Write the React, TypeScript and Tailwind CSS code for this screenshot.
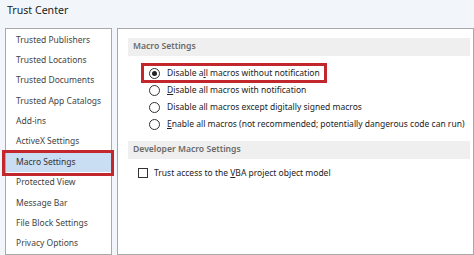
import React from 'react';

const navItems = [
  'Trusted Publishers',
  'Trusted Locations',
  'Trusted Documents',
  'Trusted App Catalogs',
  'Add-ins',
  'ActiveX Settings',
  'Macro Settings',
  'Protected View',
  'Message Bar',
  'File Block Settings',
  'Privacy Options',
];

const Radio: React.FC<{ checked?: boolean }> = ({ checked }) => (
  <span className="flex h-[11px] w-[11px] shrink-0 items-center justify-center rounded-full border border-[#333] bg-white">
    {checked && <span className="h-[5px] w-[5px] rounded-full bg-[#222]" />}
  </span>
);

const SectionHeader: React.FC<{ title: string }> = ({ title }) => (
  <div className="flex h-[18px] items-center bg-[#efefef] pl-[5px] text-[8.6px] font-semibold whitespace-nowrap text-[#6b6b6b]">
    {title}
  </div>
);

export default function App() {
  return (
    <div
      className="flex h-[255px] w-[474px] flex-col overflow-hidden bg-[#f2f6fa] text-[#333]"
      style={{ fontFamily: '"Segoe UI", "Noto Sans", sans-serif' }}
    >
      {/* Title */}
      <div className="flex h-[29px] items-center pl-[7px] pb-[5px] text-[10.6px] text-[#222]">Trust Center</div>

      <div className="flex flex-1 gap-[5px] pl-[5px]">
        {/* Left nav */}
        <div className="w-[107px] shrink-0 border border-[#a9a9a9] bg-white pt-[1px]">
          {navItems.map((item) => {
            const active = item === 'Macro Settings';
            return (
              <div
                key={item}
                className={
                  'relative flex h-[20.4px] items-center pl-[10px] text-[8.5px] whitespace-nowrap ' +
                  (active ? 'bg-[#c9ddf3] text-[#333]' : 'text-[#444]')
                }
              >
                {item}
                {active && (
                  <span className="pointer-events-none absolute -top-[2px] -bottom-[4px] -left-[4px] -right-[3px] border-[3px] border-[#c1272d]" />
                )}
              </div>
            );
          })}
        </div>

        {/* Right content */}
        <div className="flex-1 border border-[#a9a9a9] bg-white pl-[10px] pr-[3px] pt-[9px]">
          <SectionHeader title="Macro Settings" />
          <div className="flex flex-col pl-[21px] pt-[9px] text-[8.5px] whitespace-nowrap text-[#222]">
            <div className="relative flex h-[17px] items-center gap-[7px]">
              <Radio checked />
              <span>
                Disable a<span className="underline">l</span>l macros without notification
              </span>
              <span className="pointer-events-none absolute -left-[8px] top-[-2px] bottom-[-1px] w-[186px] border-[3px] border-[#c1272d]" />
            </div>
            <div className="flex h-[17px] items-center gap-[7px]">
              <Radio />
              <span>
                <span className="underline">D</span>isable all macros with notification
              </span>
            </div>
            <div className="flex h-[17px] items-center gap-[7px]">
              <Radio />
              <span>Disable all macros except digitally signed macros</span>
            </div>
            <div className="flex h-[17px] items-center gap-[7px]">
              <Radio />
              <span>
                <span className="underline">E</span>nable all macros (not recommended; potentially dangerous code can run)
              </span>
            </div>
          </div>

          <div className="mt-[8px]">
            <SectionHeader title="Developer Macro Settings" />
          </div>
          <div className="flex items-center gap-[6px] pl-[10px] pt-[8px] text-[8.5px] whitespace-nowrap text-[#222]">
            <span className="h-[10px] w-[10px] shrink-0 border border-[#333] bg-white" />
            <span>
              Trust access to the <span className="underline">V</span>BA project object model
            </span>
          </div>
        </div>
      </div>
    </div>
  );
}
